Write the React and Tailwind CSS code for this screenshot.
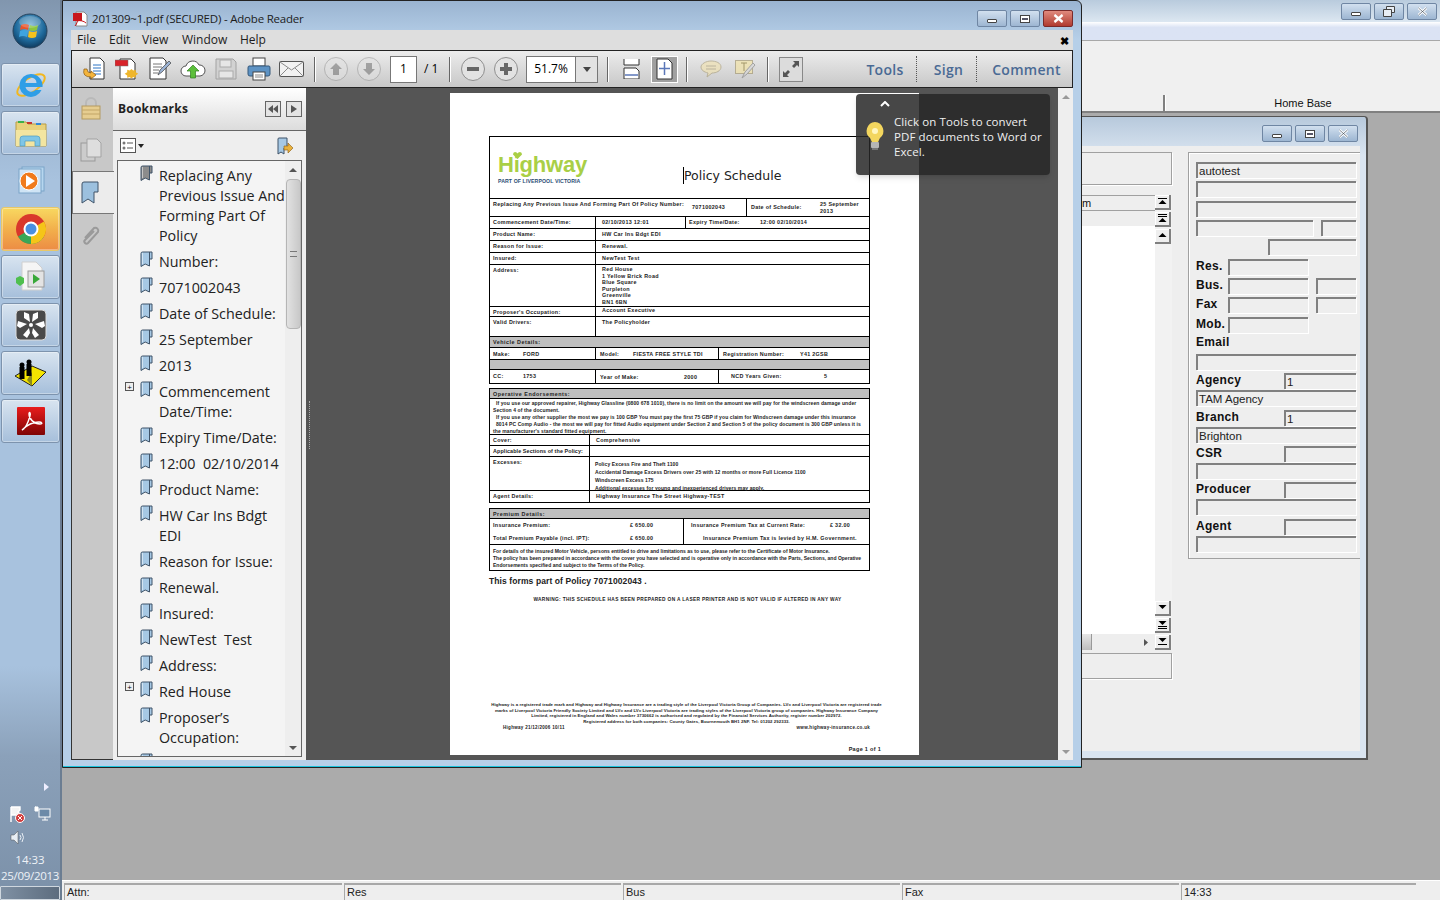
import React from 'react';

const ui = { fontFamily: '"Open Sans", "Noto Sans", sans-serif' };
const classic = { fontFamily: '"Liberation Sans", Arial, sans-serif' };

function StartOrb() {
  return (
    <svg width="36" height="36" viewBox="0 0 36 36">
      <defs>
        <radialGradient id="orb" cx="50%" cy="35%" r="70%">
          <stop offset="0" stopColor="#7fb6d8" />
          <stop offset="0.6" stopColor="#1e6a9c" />
          <stop offset="1" stopColor="#0c3050" />
        </radialGradient>
      </defs>
      <circle cx="18" cy="18" r="17" fill="url(#orb)" stroke="#27435c" />
      <path d="M9 12q4-2 8 0l-1 5q-4-2-8 0z" fill="#e8552c" />
      <path d="M18 12q4 2 8 0l-1 5q-4 2-8 0z" fill="#8cc63f" />
      <path d="M8 18q4-2 8 0l-1 6q-4-2-8 0z" fill="#3ea4e0" />
      <path d="M17 18q4 2 8 0l-1 6q-4 2-8 0z" fill="#f6c21c" />
      <ellipse cx="18" cy="9" rx="11" ry="6" fill="#fff" opacity="0.2" />
    </svg>
  );
}

function IeIcon() {
  return (
    <svg width="34" height="34" viewBox="0 0 34 34">
      <ellipse cx="17" cy="17" rx="16" ry="7" transform="rotate(-35 17 17)" fill="none" stroke="#f2b71e" strokeWidth="2" />
      <path d="M17 6a11.500 11.500 0 1 0 10.500 16h-6a6 6 0 0 1-10-3h17a11.500 11.500 0 0 0-11.500-13zM11.500 15a5.500 5.500 0 0 1 11 0z" fill="#2f9ee6" />
    </svg>
  );
}

function FolderIcon() {
  return (
    <svg width="34" height="32" viewBox="0 0 34 32">
      <path d="M2 5h10l2 2h18v22H2z" fill="#e8d27c" stroke="#b79c44" />
      <rect x="4" y="4" width="6" height="2" fill="#3db14a" />
      <rect x="13" y="5" width="5" height="2" fill="#c9352c" />
      <rect x="22" y="6" width="5" height="2" fill="#2f8ad8" />
      <path d="M2 13h30v16H2z" fill="#f3e5a0" />
      <path d="M6 29v-7q0-3 3-3h14q3 0 3 3v7h-5v-5H11v5z" fill="#7fc6e6" stroke="#4e9cc2" strokeWidth="0.7" />
    </svg>
  );
}

function MediaIcon() {
  return (
    <svg width="30" height="30" viewBox="0 0 30 30">
      <rect x="6" y="1" width="22" height="24" fill="#b6d6ef" stroke="#7aa4c8" />
      <rect x="3" y="3" width="22" height="24" fill="#cfe4f5" stroke="#7aa4c8" />
      <circle cx="13" cy="15" r="9" fill="#f07b1c" stroke="#fff" strokeWidth="1" />
      <path d="M10 9l9 6-9 6z" fill="#fff" />
    </svg>
  );
}

function ChromeIcon() {
  return (
    <svg width="32" height="32" viewBox="0 0 32 32">
      <circle cx="16" cy="16" r="15" fill="#d9372c" />
      <path d="M16 16L29 23.500A15 15 0 0 1 16 31A15 15 0 0 1 3 23.500z" fill="#3aa757" />
      <path d="M16 16L29 8.500A15 15 0 0 1 16 31z" fill="#f5c518" />
      <circle cx="16" cy="16" r="7.500" fill="#fff" />
      <circle cx="16" cy="16" r="5.500" fill="#4a8fe0" />
    </svg>
  );
}

function DocPlayIcon() {
  return (
    <svg width="32" height="32" viewBox="0 0 32 32">
      <path d="M7 1h14l6 6v22H7z" fill="#f5f5f5" stroke="#cfcfcf" />
      <rect x="13" y="10" width="16" height="16" fill="#e3e3e3" stroke="#9a9a9a" />
      <path d="M18 13l7 5-7 5z" fill="#38a838" />
      <path d="M1 17l4-2 4 2v5l-4 3-4-3z" fill="#4fbf4f" />
    </svg>
  );
}

function StarBox() {
  return (
    <svg width="32" height="32" viewBox="0 0 32 32">
      <rect x="1" y="1" width="30" height="30" rx="4" fill="#4a4a4a" stroke="#ddd" />
      <g fill="#fff">
        <path d="M9 3l5 2 1 8-6-4z" />
        <path d="M23 3l-5 2-1 8 6-4z" />
        <path d="M3 12l9 3-7 4-3-2z" />
        <path d="M29 12l-9 3 7 4 3-2z" />
        <path d="M14 19l-6 7 4 3 3-5z" />
        <path d="M18 19l6 7-4 3-3-5z" />
      </g>
      <circle cx="16" cy="16" r="2" fill="#fff" />
    </svg>
  );
}

function YellowBox() {
  return (
    <svg width="34" height="34" viewBox="0 0 34 34">
      <path d="M1 20L18 10l14 6-14 14z" fill="#f4e400" stroke="#222" />
      <path d="M13 24l5-8v14z" fill="#8a8a20" />
      <circle cx="8" cy="9" r="2.500" fill="#000" />
      <rect x="5.500" y="11" width="5" height="12" fill="#000" />
      <circle cx="15" cy="6" r="2.500" fill="#000" />
      <rect x="12.500" y="8" width="5" height="12" fill="#000" />
    </svg>
  );
}

function AcrobatTile() {
  return (
    <svg width="28" height="28" viewBox="0 0 28 28">
      <defs>
        <linearGradient id="acr" x1="0" y1="0" x2="0" y2="1">
          <stop offset="0" stopColor="#e81c1c" />
          <stop offset="1" stopColor="#7f0404" />
        </linearGradient>
      </defs>
      <rect width="28" height="28" rx="1" fill="url(#acr)" />
      <path d="M5 23c3-1 6-7 8-14 1-3-1-5-1-2 0 5 5 10 11 10 3 0 2-2-1-2-5 0-12 3-17 8z" fill="none" stroke="#fff" strokeWidth="1.400" />
    </svg>
  );
}

function PdfSmall() {
  return (
    <svg width="16" height="16" viewBox="0 0 16 16">
      <path d="M3 1h8l3 3v11H3z" fill="#fff" stroke="#888" />
      <path d="M0 2h9v8H0z" fill="#c8161d" />
      <path d="M2 15c2-2 3-6 3-9M4 10c3-1 7 0 9 2" fill="none" stroke="#c8161d" />
    </svg>
  );
}

function Bookmark({ grey }) {
  const fill = grey ? '#8c8c8c' : '#a6c8e4';
  return (
    <svg width="13" height="17" viewBox="0 0 13 17" className="shrink-0">
      <path d="M1 2.500Q1 1 2.500 1H12v7H9.500v7L5.200 13 1 15.500z" fill={fill} stroke="#3f5368" />
      <path d="M9.500 1v7" stroke="#3f5368" />
      <path d="M2.500 2v11" stroke="#fff" strokeOpacity="0.5" />
    </svg>
  );
}

function ToolIcon({ kind }) {
  if (kind === 'create') {
    return (
      <svg width="24" height="24" viewBox="0 0 24 24">
        <path d="M8 1h10l4 4v17H8z" fill="#fff" stroke="#333" />
        <path d="M11 8h8M11 11h8M11 14h8M11 17h8" stroke="#2d74c4" />
        <path d="M2 12q-2 8 7 8v2l5-4-5-4v2q-4 0-4-4z" fill="#f4b43c" stroke="#8a5a10" strokeWidth="0.7" />
      </svg>
    );
  }
  if (kind === 'edit') {
    return (
      <svg width="24" height="24" viewBox="0 0 24 24">
        <path d="M2 1h13l3 3v18H2z" fill="#fff" stroke="#333" />
        <path d="M5 7h9M5 10h9M5 13h6M5 16h5" stroke="#777" />
        <path d="M10 18l2-5 9-9 2 2-9 9z" fill="#9cb3d4" stroke="#444" strokeWidth="0.7" />
      </svg>
    );
  }
  if (kind === 'review') {
    return (
      <svg width="24" height="24" viewBox="0 0 24 24">
        <path d="M5 2h11l4 4v16H5z" fill="#fff" stroke="#333" />
        <rect x="0" y="3" width="13" height="6" fill="#d8232a" stroke="#777" strokeWidth="0.5" />
        <path d="M15 12l2 2 3-1 0 3 3 2-3 2 0 3-3-1-2 2-2-2-3 1 0-3-3-2 3-2 0-3 3 1z" fill="#efb62c" transform="translate(2 0) scale(.85 .8) translate(2 3)" />
      </svg>
    );
  }
  if (kind === 'cloud') {
    return (
      <svg width="26" height="22" viewBox="0 0 26 22">
        <path d="M6 18a5 5 0 0 1 0-10 7 7 0 0 1 13-1 5.500 5.500 0 0 1 1 11z" fill="#fff" stroke="#555" />
        <path d="M13 7l6 6h-3.500v7h-5v-7H7z" fill="#5cbf3b" stroke="#2f7f20" strokeWidth="0.7" />
      </svg>
    );
  }
  if (kind === 'save') {
    return (
      <svg width="22" height="22" viewBox="0 0 22 22">
        <path d="M1 1h17l3 3v17H1z" fill="#d2d2d2" stroke="#a2a2a2" />
        <rect x="5" y="2" width="11" height="7" fill="#e6e6e6" stroke="#aaa" />
        <rect x="4" y="13" width="14" height="7" fill="#e6e6e6" stroke="#aaa" />
      </svg>
    );
  }
  if (kind === 'print') {
    return (
      <svg width="24" height="24" viewBox="0 0 24 24">
        <rect x="6" y="1" width="12" height="8" fill="#fff" stroke="#444" />
        <path d="M2 9h20q1 0 1 2v6q0 2-2 2H3q-2 0-2-2v-6q0-2 1-2z" fill="#5e93c4" stroke="#35587a" />
        <rect x="6" y="15" width="12" height="8" fill="#fff" stroke="#444" />
        <path d="M8 18h8M8 20h8" stroke="#888" />
      </svg>
    );
  }
  return (
    <svg width="25" height="18" viewBox="0 0 25 18">
      <rect x="0.500" y="1.500" width="24" height="15" rx="1" fill="#f2f2f2" stroke="#555" />
      <path d="M1 2l11.500 8L24 2M1 16l8-8M24 16l-8-8" fill="none" stroke="#8a8a8a" />
    </svg>
  );
}

function RoundBtn({ d, dim }) {
  return (
    <span className={`flex h-[24px] w-[24px] items-center justify-center rounded-full border border-[#8f8f8f] bg-[#e2e2e2] ${dim ? 'opacity-50' : ''}`}>
      <svg width="16" height="16" viewBox="0 0 16 16"><path d={d} fill="#666" /></svg>
    </span>
  );
}

const Sep = ({ cls }) => <span className={`h-[25px] w-[2px] shrink-0 border-l border-[#666] bg-white ${cls}`} />;

function AdobeToolbar() {
  return (
    <div className="flex h-[38px] items-center border border-[#222] bg-gradient-to-b from-[#ececec] to-[#c8c8c8] pl-[5px]" >
      {['create', 'review', 'edit', 'cloud', 'save', 'print', 'mail'].map((k) => (
        <span key={k} className="flex w-[33px] shrink-0 justify-center"><ToolIcon kind={k} /></span>
      ))}
      <Sep cls="ml-[6px]" />
      <span className="ml-[8px] flex w-[57px] justify-between">
        <RoundBtn dim d="M8 2l6 6h-3v6H5V8H2z" />
        <RoundBtn dim d="M8 14l6-6h-3V2H5v6H2z" />
      </span>
      <span className="ml-[9px] flex h-[27px] w-[27px] items-center justify-center border border-[#777] bg-white text-[12px] text-black">1</span>
      <span className="ml-[7px] w-[25px] text-[12px] text-black">/ 1</span>
      <Sep cls="ml-[0px]" />
      <span className="ml-[10px] flex w-[57px] justify-between">
        <RoundBtn d="M2 6h12v4H2z" />
        <RoundBtn d="M6 2h4v4h4v4h-4v4H6v-4H2V6h4z" />
      </span>
      <span className="ml-[8px] flex h-[27px] w-[72px] items-center border border-[#777] bg-white">
        <span className="flex-1 text-center text-[12px] text-black">51.7%</span>
        <span className="flex h-full w-[22px] items-center justify-center border-l border-[#777] bg-[#e2e2e2]">
          <svg width="8" height="5"><path d="M0 0h8L4 5z" fill="#444" /></svg>
        </span>
      </span>
      <Sep cls="ml-[9px]" />
      <span className="ml-[13px] flex w-[18px] justify-center">
        <svg width="17" height="20" viewBox="0 0 17 20">
          <path d="M1 0v6h15V0" fill="#fff" stroke="#333" />
          <path d="M1 20v-11h12l3 3v8z" fill="#fff" stroke="#333" />
          <path d="M2 16h13" stroke="#5b77b8" strokeWidth="1.500" />
        </svg>
      </span>
      <span className="ml-[11px] flex h-[27px] w-[27px] items-center justify-center border border-white bg-[#a0a0a0]">
        <svg width="17" height="22" viewBox="0 0 17 22">
          <path d="M1 1h11l4 4v16H1z" fill="#fff" stroke="#333" />
          <path d="M8.500 4v13M3 10.500h11" stroke="#5b77b8" strokeWidth="1.500" />
        </svg>
      </span>
      <Sep cls="ml-[8px]" />
      <span className="ml-[11px] flex w-[24px] justify-center opacity-60">
        <svg width="22" height="20" viewBox="0 0 22 20">
          <path d="M11 2c5 0 10 2 10 6s-5 6-9 6l-5 4 1-4c-4-1-7-3-7-6s5-6 10-6z" fill="#f3e3ad" stroke="#a69a74" />
          <path d="M6 7h10M6 10h10" stroke="#a69a74" />
        </svg>
      </span>
      <span className="ml-[10px] flex w-[24px] justify-center opacity-70">
        <svg width="21" height="20" viewBox="0 0 21 20">
          <rect x="0.500" y="1.500" width="17" height="13" fill="#f2e3a8" stroke="#a69a74" />
          <path d="M6 4h6M9 4v8" stroke="#8a7a3a" />
          <path d="M7 19l3-6 8-9 2 2-8 9z" fill="#d8d8d8" stroke="#8a8a8a" />
        </svg>
      </span>
      <Sep cls="ml-[10px]" />
      <span className="ml-[10px] flex h-[25px] w-[24px] items-center justify-center border border-[#888] bg-[#dcdcdc]">
        <svg width="18" height="18" viewBox="0 0 18 18"><path d="M11 1h6v6l-2-2-3 3-2-2 3-3zM7 17H1v-6l2 2 3-3 2 2-3 3z" fill="#555" /></svg>
      </span>
      <span className="ml-auto flex h-[26px] items-center text-[14px] font-semibold tracking-[0.3px] text-[#4a6a94]">
        <span className="flex w-[66px] justify-center pl-[4px]">Tools</span>
        <span className="h-full border-l border-dotted border-[#555]" />
        <span className="flex w-[59px] justify-center pl-[4px]">Sign</span>
        <span className="h-full border-l border-dotted border-[#555]" />
        <span className="flex w-[95px] justify-center pl-[4px]">Comment</span>
      </span>
    </div>
  );
}

const bookmarks = [
  { t: ['Replacing Any', 'Previous Issue And', 'Forming Part Of', 'Policy'], grey: true },
  { t: ['Number:'] },
  { t: ['7071002043'] },
  { t: ['Date of Schedule:'] },
  { t: ['25 September'] },
  { t: ['2013'] },
  { t: ['Commencement', 'Date/Time:'], plus: true },
  { t: ['Expiry Time/Date:'] },
  { t: ['12:00  02/10/2014'] },
  { t: ['Product Name:'] },
  { t: ['HW Car Ins Bdgt', 'EDI'] },
  { t: ['Reason for Issue:'] },
  { t: ['Renewal.'] },
  { t: ['Insured:'] },
  { t: ['NewTest  Test'] },
  { t: ['Address:'] },
  { t: ['Red House'], plus: true },
  { t: ['Proposer\u2019s', 'Occupation:'] },
  { t: [''] },
];

function BookmarkRow({ item }) {
  return (
    <div className="relative flex pl-[22px] pt-[3px] pb-[3px]">
      {item.plus && (
        <span className="absolute left-[7px] top-[3px] flex h-[9px] w-[9px] items-center justify-center border border-[#555] bg-[#eee] text-[8px] leading-none text-black">+</span>
      )}
      <span className="-mt-[1px] w-[19px] shrink-0"><Bookmark grey={item.grey} /></span>
      <div className="whitespace-pre text-[14.300px] leading-[20px] text-[#222]">
        {item.t.map((l, i) => <div key={i} className="h-[20px]">{l}</div>)}
      </div>
    </div>
  );
}

function SidePanel() {
  return (
    <div className="flex w-[235px] shrink-0">
      <div className="relative flex w-[42px] flex-col border-l border-b border-[#333] bg-[#c8c8c8]">
        <span className="ml-[9px] mt-[8px] block">
          <svg width="20" height="24" viewBox="0 0 20 24">
            <path d="M5 11V7a5 5 0 0 1 10 0v4" fill="none" stroke="#b9b9b9" strokeWidth="2" />
            <rect x="1" y="10" width="18" height="13" fill="#e6cd90" stroke="#b39a60" />
            <path d="M1 14h18M1 18h18" stroke="#c2a566" />
          </svg>
        </span>
        <span className="ml-[8px] mt-[18px] block">
          <svg width="22" height="24" viewBox="0 0 22 24">
            <rect x="1" y="5" width="14" height="18" fill="#ccc" stroke="#999" />
            <path d="M7 1h10l4 4v14H7z" fill="#dedede" stroke="#a3a3a3" />
          </svg>
        </span>
        <div className="mt-[9px] flex h-[43px] w-[42px] items-center border-y border-l border-[#777] bg-[#ececec] pl-[8px]">
          <svg width="18" height="24" viewBox="0 0 18 24">
            <path d="M1 3q0-2 2-2h14v10h-4v11l-6-4-6 4z" fill="#9cc0de" stroke="#3f5368" />
          </svg>
        </div>
        <span className="ml-[8px] mt-[9px] block">
          <svg width="22" height="24" viewBox="0 0 22 24">
            <path d="M5 15l9-10a3 3 0 0 1 4 4L8 20a2 2 0 0 1-3-3l9-9" fill="none" stroke="#9a9a9a" strokeWidth="2" />
          </svg>
        </span>
      </div>
      <div className="flex w-[193px] flex-col overflow-hidden bg-[#eeeeee]">
        <div className="flex h-[43px] shrink-0 items-center border-b border-[#666] bg-gradient-to-b from-white to-[#dcdcdc] pl-[5px] pr-[4px]">
          <span className="flex-1 text-[12px] font-bold tracking-[0.2px] text-[#222]">Bookmarks</span>
          <span className="flex h-[16px] w-[16px] items-center justify-center border border-[#666] bg-[#e4e4e4]">
            <svg width="10" height="8"><path d="M5 0v8L0 4zM10 0v8L5 4z" fill="#555" /></svg>
          </span>
          <span className="ml-[5px] flex h-[16px] w-[16px] items-center justify-center border border-[#666] bg-[#e4e4e4]">
            <svg width="6" height="8"><path d="M0 0v8l6-4z" fill="#555" /></svg>
          </span>
        </div>
        <div className="flex h-[29px] shrink-0 items-center pl-[7px] pr-[13px]">
          <svg width="16" height="15" viewBox="0 0 16 15">
            <rect x="0.500" y="0.500" width="15" height="14" fill="#fff" stroke="#555" />
            <circle cx="4" cy="5" r="1.500" fill="#777" /><circle cx="4" cy="10" r="1.500" fill="#777" />
            <path d="M7 5h6M7 10h6" stroke="#555" />
          </svg>
          <svg className="ml-[2px]" width="6" height="4"><path d="M0 0h6L3 4z" fill="#222" /></svg>
          <span className="ml-auto">
            <svg width="16" height="18" viewBox="0 0 16 18">
              <path d="M1 2q0-1 1-1h8v10H7v6l-3-2-3 2z" fill="#a6c8e4" stroke="#3f5368" />
              <path d="M7 9h4V6l5 5-5 5v-3H7z" fill="#e9b13c" stroke="#8a5a10" strokeWidth="0.6" />
            </svg>
          </span>
        </div>
        <div className="ml-[4px] flex h-[597px] w-[185px] overflow-hidden border border-[#666] bg-[#f4f4f4]">
          <div className="w-[167px] shrink-0 pt-[2px]">
            {bookmarks.map((b, i) => <BookmarkRow key={i} item={b} />)}
          </div>
          <div className="flex w-[16px] flex-col items-center bg-[#eeeeee]">
            <svg className="mt-[7px]" width="8" height="4"><path d="M0 4h8L4 0z" fill="#555" /></svg>
            <div className="mt-[7px] flex h-[150px] w-[15px] items-center justify-center rounded-sm border border-[#b5b5b5] bg-gradient-to-r from-[#e2e2e2] to-[#c8c8c8]">
              <span className="h-[6px] w-[7px] border-y border-[#777]" />
            </div>
            <svg className="mb-[6px] mt-auto" width="8" height="4"><path d="M0 0h8L4 4z" fill="#555" /></svg>
          </div>
        </div>
      </div>
    </div>
  );
}

const Row = ({ h, grey, last, children }) => (
  <div className={`flex ${h} ${grey ? 'bg-[#bfbfbf]' : ''} ${last ? '' : 'border-b border-black'}`}>{children}</div>
);
const Cell = ({ w, children }) => (
  <div className={`${w} overflow-hidden whitespace-nowrap border-r border-black pl-[3px] pt-[2px]`}>{children}</div>
);

function PolicyPage() {
  return (
    <div className="relative ml-[144px] mt-[5px] h-[662px] w-[469px] overflow-hidden bg-white pl-[39px] pt-[43px] text-[5.400px] font-semibold leading-[6.500px] tracking-[0.3px] text-[#222]" style={classic}>
      <div className="w-[381px] border border-black">
        <Row h="h-[62px]">
          <div className="relative w-[193px] pl-[8px] pt-[16px]">
            <svg className="absolute left-[23px] top-[15px]" width="9" height="7" viewBox="0 0 9 7"><path d="M4.500 7L0 2.500Q0 0 2 0q2 0 2.500 1.500Q5 0 7 0q2 0 2 2.500z" fill="#a9cf46" /></svg>
            <div className="text-[22px] font-bold leading-[24px] tracking-[-0.2px] text-[#a9cf46]">Highway</div>
            <div className="mt-[1px] text-[5.200px] font-bold leading-[6px] tracking-[0.1px] text-[#2a4d74]">PART OF LIVERPOOL VICTORIA</div>
          </div>
          <div className="mt-[30px] h-[17px] border-l border-black pl-[0px] text-[12.500px] font-normal leading-[17px] tracking-normal text-[#222]" style={{ fontFamily: '"DejaVu Sans", sans-serif' }}>Policy Schedule</div>
        </Row>
        <Row h="h-[18px]">
          <div className="w-[257px] border-r border-black pl-[3px] pt-[2px]">
            <div className="flex">
              <span className="w-[199px]">Replacing Any Previous Issue And Forming Part Of Policy Number:</span>
              <span className="pt-[3px]">7071002043</span>
            </div>
          </div>
          <div className="flex pl-[4px] pt-[5px]">
            <span className="w-[69px]">Date of Schedule:</span>
            <span className="-mt-[3px] w-[44px]">25 September 2013</span>
          </div>
        </Row>
        <Row h="h-[12px]">
          <Cell w="w-[106px]">Commencement Date/Time:</Cell>
          <Cell w="w-[90px]"><span className="ml-[3px]">02/10/2013  12:01</span></Cell>
          <div className="flex pl-[3px] pt-[2px]"><span className="w-[71px]">Expiry Time/Date:</span><span>12:00  02/10/2014</span></div>
        </Row>
        {[['Product Name:', 'HW Car Ins Bdgt EDI'], ['Reason for Issue:', 'Renewal.'], ['Insured:', 'NewTest  Test']].map(([a, b]) => (
          <Row key={a} h="h-[12px]"><Cell w="w-[106px]">{a}</Cell><div className="pl-[6px] pt-[2px]">{b}</div></Row>
        ))}
        <Row h="h-[42px]">
          <Cell w="w-[106px]">Address:</Cell>
          <div className="pl-[6px] pt-[1px]">
            <div>Red House</div><div>1 Yellow Brick Road</div><div>Blue Square</div><div>Purpleton</div><div>Greenville</div><div>BN1 6BN</div>
          </div>
        </Row>
        <Row h="h-[10px]"><Cell w="w-[106px]">Proposer's Occupation:</Cell><div className="pl-[6px]">Account Executive</div></Row>
        <Row h="h-[20px]"><Cell w="w-[106px]">Valid Drivers:</Cell><div className="pl-[6px] pt-[2px]">The Policyholder</div></Row>
        <Row h="h-[11px]" grey><div className="pl-[3px] pt-[2px] tracking-[0.5px]">Vehicle Details:</div></Row>
        <Row h="h-[12px]">
          <div className="w-[106px] border-r border-black pl-[3px] pt-[3px]"><span className="inline-block w-[30px]">Make:</span>FORD</div>
          <div className="flex w-[123px] border-r border-black pl-[4px] pt-[3px]"><span className="w-[33px]">Model:</span>FIESTA FREE STYLE TDI</div>
          <div className="flex pl-[4px] pt-[3px]"><span className="w-[77px]">Registration Number:</span>Y41 2GSB</div>
        </Row>
        <Row h="h-[10px]" grey />
        <Row h="h-[13px]" last>
          <Cell w="w-[106px]"><span className="inline-block w-[30px] pt-[1px]">CC:</span>1753</Cell>
          <div className="flex w-[123px] border-r border-black pl-[4px] pt-[4px]"><span className="w-[84px]">Year of Make:</span>2000</div>
          <div className="flex pl-[12px] pt-[3px]"><span className="w-[93px]">NCD Years Given:</span>5</div>
        </Row>
      </div>

      <div className="mt-[4px] w-[381px] border border-black">
        <Row h="h-[10px]" grey><div className="pl-[3px] pt-[2px] tracking-[0.5px]">Operative Endorsements:</div></Row>
        <Row h="h-[36px]">
          <div className="whitespace-pre-wrap pl-[3px] pt-[1px] text-[5px] leading-[7px] tracking-[0.1px]">
            <div>  If you use our approved repairer, Highway Glassline (0800 678 1010), there is no limit on the amount we will pay for the windscreen damage under</div>
            <div>Section 4 of the document.</div>
            <div>  If you use any other supplier the most we pay is 100 GBP You must pay the first 75 GBP if you claim for Windscreen damage under this insurance</div>
            <div>  8014 PC Comp Audio - the most we will pay for fitted Audio equipment under Section 2 and Section 5 of the policy document is 300 GBP unless it is</div>
            <div>the manufacturer's standard fitted equipment.</div>
          </div>
        </Row>
        <Row h="h-[11px]"><Cell w="w-[100px]">Cover:</Cell><div className="pl-[6px] pt-[2px]">Comprehensive</div></Row>
        <Row h="h-[11px]"><Cell w="w-[100px]"><span className="tracking-[0.1px]">Applicable Sections of the Policy:</span></Cell></Row>
        <Row h="h-[34px]">
          <Cell w="w-[100px]">Excesses:</Cell>
          <div className="pl-[5px] pt-[3px] text-[5px] leading-[8px] tracking-[0.1px]">
            <div> Policy Excess Fire and Theft 1100</div>
            <div>Accidental Damage Excess Drivers over 25 with 12 months or more Full Licence 1100</div>
            <div>Windscreen Excess 175</div>
            <div>Additional excesses for young and inexperienced drivers may apply.</div>
          </div>
        </Row>
        <Row h="h-[11px]" last><Cell w="w-[100px]">Agent Details:</Cell><div className="pl-[6px] pt-[2px]">Highway Insurance The Street Highway-TEST</div></Row>
      </div>

      <div className="mt-[5px] w-[381px] border border-black">
        <Row h="h-[10px]" grey><div className="pl-[3px] pt-[2px] tracking-[0.5px]">Premium Details:</div></Row>
        <Row h="h-[26px]">
          <div className="w-[194px] border-r border-black pl-[3px] pt-[3px]">
            <div className="flex h-[13px]"><span className="w-[137px]">Insurance Premium:</span>£ 650.00</div>
            <div className="flex"><span className="w-[137px]">Total Premium Payable (incl. IPT):</span>£ 650.00</div>
          </div>
          <div className="pl-[7px] pt-[3px]">
            <div className="flex h-[13px]"><span className="w-[139px]">Insurance Premium Tax at Current Rate:</span>£ 32.00</div>
            <div className="pl-[12px]">Insurance Premium Tax is levied by H.M. Government.</div>
          </div>
        </Row>
        <Row h="h-[25px]" last>
          <div className="whitespace-nowrap pl-[3px] pt-[3px] text-[5px] leading-[7px] tracking-[0.02px]">
            <div>For details of the insured Motor Vehicle, persons entitled to drive and limitations as to use, please refer to the Certificate of Motor Insurance.</div>
            <div>The policy has been prepared in accordance with the cover you have selected and is operative only in accordance with the Parts, Sections, and Operative</div>
            <div>Endorsements specified and subject to the Terms of the Policy.</div>
          </div>
        </Row>
      </div>

      <div className="mt-[5px] text-[8.500px] leading-[11px] tracking-[0.1px]">This forms part of Policy  7071002043  .</div>
      <div className="mt-[10px] w-[381px] whitespace-nowrap pl-[16px] text-center text-[4.800px] leading-[6px] tracking-[0.35px]">WARNING: THIS SCHEDULE HAS BEEN PREPARED ON A LASER PRINTER AND IS NOT VALID IF ALTERED IN ANY WAY</div>
      <div className="mt-[99px] w-[395px] text-center text-[4.300px] leading-[5.500px] tracking-[0.07px]">
        <div>Highway is a registered trade mark and Highway and Highway Insurance are a trading style of the Liverpool Victoria Group of Companies. LV= and Liverpool Victoria are registered trade</div>
        <div>marks of Liverpool Victoria Friendly Society Limited and LV= and LV= Liverpool Victoria are trading styles of the Liverpool Victoria group of companies. Highway Insurance Company</div>
        <div>Limited, registered in England and Wales number 3730662 is authorised and regulated by the Financial Services Authority, register number 202972.</div>
        <div>Registered address for both companies: County Gates, Bournemouth BH1 2NF. Tel: 01202 292333.</div>
      </div>
      <div className="flex w-[381px] justify-between pl-[14px] pt-[1px] text-[4.500px] leading-[6px]">
        <span>Highway 21/12/2006 10/11</span><span>www.highway-insurance.co.uk</span>
      </div>
      <div className="mt-[15px] w-[392px] text-right text-[5.500px] leading-[7px]">Page  1  of  1</div>
    </div>
  );
}

function Tooltip() {
  return (
    <div className="absolute left-[785px] top-[6px] flex h-[81px] w-[194px] rounded-[4px] bg-[rgba(39,39,39,0.85)] shadow-md" >
      <svg className="absolute left-[24px] top-[7px]" width="10" height="6" viewBox="0 0 10 6"><path d="M1 5l4-4 4 4" fill="none" stroke="#fff" strokeWidth="2" /></svg>
      <svg className="absolute left-[9px] top-[27px]" width="20" height="30" viewBox="0 0 20 30">
        <path d="M10 1a9 9 0 0 0-5 16c1 1 1 3 2 4h6c1-1 1-3 2-4a9 9 0 0 0-5-16z" fill="#f3d65e" />
        <circle cx="10" cy="10" r="3" fill="#fff6c0" />
        <rect x="6" y="21" width="8" height="6" rx="1" fill="#b5b5b5" />
        <rect x="7" y="27" width="6" height="2" fill="#777" />
      </svg>
      <div className="ml-[38px] mt-[20px] w-[152px] text-[11.500px] leading-[15px] tracking-[0.1px] text-[#f0f0f0]">
        Click on Tools to convert PDF documents to Word or Excel.
      </div>
    </div>
  );
}

function WinButtons({ restore, redClose }) {
  return (
    <div className="flex gap-[3px]">
      <span className="flex h-[17px] w-[30px] items-end justify-center rounded-[2px] border border-[#6f86a3] bg-gradient-to-b from-[#d2e0ef] to-[#9db6d2] pb-[3px]">
        <span className="h-[4px] w-[10px] rounded-[1px] border border-[#444] bg-white" />
      </span>
      <span className="flex h-[17px] w-[30px] items-center justify-center rounded-[2px] border border-[#6f86a3] bg-gradient-to-b from-[#d2e0ef] to-[#9db6d2]">
        {restore ? (
          <svg width="12" height="11" viewBox="0 0 12 11"><path d="M3.500 3V.500h8v6H9M.500 3.500h8v7h-8z" fill="#e8eef5" stroke="#444" /></svg>
        ) : (
          <span className="flex h-[8px] w-[10px] items-center justify-center border border-[#444] bg-white"><span className="h-[2px] w-[6px] bg-[#556]" /></span>
        )}
      </span>
      <span className={`flex h-[17px] w-[30px] items-center justify-center rounded-[2px] border ${redClose ? 'border-[#7a2a2a] bg-gradient-to-b from-[#e08a7e] to-[#b03a30]' : 'border-[#6f86a3] bg-gradient-to-b from-[#d2e0ef] to-[#9db6d2]'}`}>
        <svg width="11" height="9" viewBox="0 0 11 9"><path d="M1.500 1l8 7M9.500 1l-8 7" stroke="#fff" strokeWidth="2.400" /><path d="M1.500 1l8 7M9.500 1l-8 7" stroke={redClose ? '#fff' : '#44505e'} strokeWidth="0.700" /></svg>
      </span>
    </div>
  );
}

function AdobeWindow() {
  return (
    <div className="absolute left-[62px] top-0 z-20 flex h-[768px] w-[1020px] flex-col rounded-tr-[6px] border-t border-l border-r border-b border-[#222] bg-gradient-to-b from-[#9ab4d1] to-[#b6cfe8] to-[5%]" style={ui}>
      <div className="flex h-[29px] shrink-0 items-center pl-[10px] pr-[8px] pt-[6px]">
        <PdfSmall />
        <span className="ml-[3px] flex-1 text-[11.500px] tracking-[-0.2px] text-[#1c1c1c]">201309~1.pdf (SECURED) - Adobe Reader</span>
        <WinButtons redClose />
      </div>
      <div className="mx-[8px] flex flex-col">
        <div className="flex h-[20px] items-center bg-[#dedede] pl-[6px] text-[12px] text-[#1c1c1c]">
          <span className="w-[32px]">File</span>
          <span className="w-[33px]">Edit</span>
          <span className="w-[40px]">View</span>
          <span className="w-[58px]">Window</span>
          <span>Help</span>
          <span className="ml-auto pr-[4px] text-[11px] font-bold leading-none text-black">✖</span>
        </div>
        <AdobeToolbar />
        <div className="relative flex h-[672px] bg-[#555555]">
          <SidePanel />
          <div className="absolute left-[238px] top-[313px] h-[48px] border-l border-dotted border-[#aaa]" />
          <div className="flex-1 overflow-hidden"><PolicyPage /></div>
          <div className="flex w-[15px] shrink-0 flex-col items-center bg-[#eeeeee]">
            <svg className="mt-[7px]" width="8" height="4"><path d="M0 4h8L4 0z" fill="#999" /></svg>
            <svg className="mb-[6px] mt-auto" width="8" height="4"><path d="M0 0h8L4 4z" fill="#999" /></svg>
          </div>
          <Tooltip />
        </div>
      </div>
      <div className="mt-auto h-[1px] bg-[#19c3dc]" />
    </div>
  );
}

const Field = ({ w, ml, children }) => (
  <div className={`${w} ${ml || ''} h-[16px] shrink-0 overflow-hidden border-t-2 border-l-2 border-t-[#808080] border-l-[#808080] bg-[#eeeeee] pl-[1px] text-[11.500px] leading-[15px] text-[#222] shadow-[1px_1px_0_#fff]`} style={classic}>{children}</div>
);
const Lbl = ({ w, children }) => (
  <span className={`${w} -mt-[1px] shrink-0 text-[12px] font-bold leading-[16px] tracking-[0.3px] text-[#111]`} style={classic}>{children}</span>
);

function ScrollBtn({ d }) {
  return (
    <span className="flex h-[15px] w-[16px] items-center justify-center border-r-2 border-b-2 border-[#808080] bg-[#eeeeee] shadow-[inset_1px_1px_0_#fff]">
      <svg width="9" height="9" viewBox="0 0 9 9"><path d={d} fill="#000" /></svg>
    </span>
  );
}

function HomeBaseWindow() {
  return (
    <div className="absolute left-[950px] top-0 z-10 h-[880px] w-[490px]" style={classic}>
      <div className="flex h-[22px] items-center justify-end bg-gradient-to-b from-[#b9cbdd] to-[#dce7f1] pr-[3px]">
        <WinButtons restore />
      </div>
      <div className="h-[18px] bg-gradient-to-b from-white to-[#dbe3f4] to-[30%]" />
      <div className="h-[55px] border-t border-[#a8a8a8] bg-[#f0f0f0]" />
      <div className="flex h-[18px] border-b-2 border-[#808080] bg-[#f0f0f0]">
        <span className="w-[215px] border-r-2 border-[#808080]" />
        <span className="flex-1 border-l border-white text-center text-[11px] leading-[17px] text-[#111]">Home Base</span>
      </div>

      <div className="mt-[3px] flex h-[644px] w-[418px] flex-col rounded-tr-[4px] border-t border-r-2 border-b-2 border-[#555] bg-gradient-to-b from-[#b7c9dc] to-[#dae5f1] to-[6%] pr-[6px]">
        <div className="flex h-[29px] shrink-0 items-center justify-end pr-[2px] pt-[4px]"><WinButtons /></div>
        <div className="flex flex-1 border-b-[7px] border-[#d9e4f0] bg-[#eeeeee] pb-[0px]">
          <div className="ml-[132px] flex w-[90px] shrink-0 flex-col">
            <div className="mt-[6px] h-[33px] border border-[#a0a0a0] border-l-0 shadow-[1px_1px_0_#fff]" />
            <div className="mt-[10px] flex h-[455px]">
              <div className="flex flex-1 flex-col">
                <div className="h-[16px] border-y border-[#a0a0a0] bg-[#eeeeee] text-[11px] leading-[15px] text-[#111]">m</div>
                <div className="h-[15px] bg-[#eeeeee]" />
                <div className="flex-1 bg-white" />
                <div className="flex h-[16px] items-center bg-[#eeeeee] pr-[7px]">
                  <span className="h-[16px] w-[10px] border-r border-[#999] bg-gradient-to-b from-[#e6e6e6] to-[#bdbdbd]" />
                  <svg className="ml-auto" width="4" height="7"><path d="M0 0v7l4-3.500z" fill="#555" /></svg>
                </div>
              </div>
              <div className="flex w-[17px] flex-col bg-[#f2f2f2]">
                <ScrollBtn d="M0 1h9v1H0zM4.500 3l4 4h-8z" />
                <span className="mt-[2px]"><ScrollBtn d="M0 0h9v1H0zM0 2h9v1H0zM4.500 4l4 4h-8z" /></span>
                <span className="mt-[2px]"><ScrollBtn d="M4.500 2l4 4h-8z" /></span>
                <span className="mt-auto"><ScrollBtn d="M0.500 2h8l-4 4z" /></span>
                <span className="mt-[2px]"><ScrollBtn d="M.5 1h8l-4 4zM0 6h9v1H0zM0 8h9v1H0z" /></span>
                <span className="mt-[2px]"><ScrollBtn d="M.5 1h8l-4 4zM0 7h9v1H0z" /></span>
              </div>
            </div>
            <div className="mt-[3px] h-[26px] border border-[#a0a0a0] border-l-0 shadow-[1px_1px_0_#fff]" />
          </div>
          <div className="ml-[16px] mt-[6px] h-[407px] w-[173px] border-t border-l border-b border-[#a0a0a0] pl-[7px] pt-[9px] shadow-[inset_1px_1px_0_#fff]">
            <Field w="w-[160px]">autotest</Field>
            <div className="mt-[3px]"><Field w="w-[160px]" /></div>
            <div className="mt-[4px]"><Field w="w-[160px]" /></div>
            <div className="mt-[3px] flex"><Field w="w-[117px]" /><Field w="w-[35px]" ml="ml-[8px]" /></div>
            <div className="mt-[3px] flex"><Field w="w-[88px]" ml="ml-[72px]" /></div>
            <div className="mt-[4px] flex"><Lbl w="w-[32px]">Res.</Lbl><Field w="w-[80px]" /></div>
            <div className="mt-[3px] flex"><Lbl w="w-[32px]">Bus.</Lbl><Field w="w-[80px]" /><Field w="w-[40px]" ml="ml-[8px]" /></div>
            <div className="mt-[3px] flex"><Lbl w="w-[32px]">Fax</Lbl><Field w="w-[80px]" /><Field w="w-[40px]" ml="ml-[8px]" /></div>
            <div className="mt-[4px] flex"><Lbl w="w-[32px]">Mob.</Lbl><Field w="w-[80px]" /></div>
            <div className="mt-[2px] flex h-[19px]"><Lbl>Email</Lbl></div>
            <Field w="w-[160px]" />
            <div className="mt-[3px] flex"><Lbl w="w-[88px]">Agency</Lbl><Field w="w-[72px]">1</Field></div>
            <div className="mt-[1px]"><Field w="w-[160px]">TAM Agency</Field></div>
            <div className="mt-[4px] flex"><Lbl w="w-[88px]">Branch</Lbl><Field w="w-[72px]">1</Field></div>
            <div className="mt-[1px]"><Field w="w-[160px]">Brighton</Field></div>
            <div className="mt-[3px] flex"><Lbl w="w-[88px]">CSR</Lbl><Field w="w-[72px]" /></div>
            <div className="mt-[1px]"><Field w="w-[160px]" /></div>
            <div className="mt-[3px] flex"><Lbl w="w-[88px]">Producer</Lbl><Field w="w-[72px]" /></div>
            <div className="mt-[1px]"><Field w="w-[160px]" /></div>
            <div className="mt-[4px] flex"><Lbl w="w-[88px]">Agent</Lbl><Field w="w-[72px]" /></div>
            <div className="mt-[1px]"><Field w="w-[160px]" /></div>
          </div>
        </div>
      </div>
    </div>
  );
}

function Tile({ active, pale, children }) {
  if (pale) {
    return <div className="flex h-[44px] items-center justify-center">{children}</div>;
  }
  const tone = active
    ? 'border-[#e8c868] bg-gradient-to-b from-[#f8d860] via-[#f2b04c] to-[#ec8c44]'
    : 'border-[#7d93ad] bg-gradient-to-b from-[#d8e4f0] to-[#a6bfdb]';
  return (
    <div className={`flex h-[44px] items-center justify-center rounded-[3px] border shadow-[inset_0_0_0_1px_rgba(255,255,255,0.35)] ${tone}`}>{children}</div>
  );
}

function Taskbar() {
  return (
    <div className="absolute left-0 top-0 z-30 flex h-[900px] w-[62px] flex-col border-r-2 border-[#6b7d92] bg-[linear-gradient(to_bottom,#8196ae_0%,#8fa7c2_6%,#a8c2de_20%,#a8c2de_74%,#8ba1ba_84%,#7b90a8_100%)]" style={ui}>
      <div className="flex h-[60px] shrink-0 items-center justify-center pt-[1px]"><StartOrb /></div>
      <div className="mt-[3px] flex flex-col gap-[4px] pl-[1px]">
        <Tile><IeIcon /></Tile>
        <Tile><FolderIcon /></Tile>
        <Tile pale><MediaIcon /></Tile>
        <Tile active><ChromeIcon /></Tile>
        <Tile><DocPlayIcon /></Tile>
        <Tile><StarBox /></Tile>
        <Tile><YellowBox /></Tile>
        <Tile><AcrobatTile /></Tile>
      </div>
      <div className="mt-auto flex flex-col items-center pb-[0px]">
        <svg className="ml-[32px]" width="5" height="8"><path d="M0 0v8l5-4z" fill="#eef" /></svg>
        <div className="mt-[15px] flex gap-[9px]">
          <svg width="16" height="17" viewBox="0 0 16 17">
            <path d="M2 1v15M2 1h9v3l-2 2 2 2v1H2" fill="#f4f4f4" stroke="#fff" strokeWidth="1.400" />
            <circle cx="11" cy="12" r="4.500" fill="#d23c3c" stroke="#fff" />
            <path d="M9 10l4 4M13 10l-4 4" stroke="#fff" />
          </svg>
          <svg width="17" height="15" viewBox="0 0 17 15">
            <rect x="5" y="3" width="11" height="8" fill="#6c8aa8" stroke="#fff" />
            <path d="M8 14h6M11 11v3" stroke="#fff" />
            <path d="M1 1h1M3 1h1v4H1V1z" stroke="#fff" fill="#fff" />
          </svg>
        </div>
        <svg className="-ml-[25px] mt-[7px]" width="15" height="15" viewBox="0 0 15 15">
          <path d="M1 5h3l4-4v13l-4-4H1z" fill="#e8eef4" stroke="#555" strokeWidth="0.500" />
          <path d="M10 5q2 2.500 0 5M12 3q3 4.500 0 9" fill="none" stroke="#e8eef4" />
        </svg>
        <div className="mt-[7px] text-[11.500px] leading-[16px] text-[#eef2f7]">14:33</div>
        <div className="text-[11.500px] leading-[16px] tracking-[-0.3px] text-[#eef2f7]">25/09/2013</div>
        <div className="mt-[2px] h-[14px] w-[60px] self-start rounded-[1px] border border-[#cfd7df] bg-gradient-to-r from-[#7f90a3] to-[#5c6c7e]" />
      </div>
    </div>
  );
}

function StatusCell({ w, children }) {
  return (
    <div className={`${w} ml-[2px] h-[17px] shrink-0 border-t-2 border-l border-[#a8a8a8] pl-[2px] text-[11px] leading-[15px] text-[#222]`}>{children}</div>
  );
}

function StatusBar() {
  return (
    <div className="absolute bottom-0 left-[62px] right-0 z-10 flex h-[20px] items-end border-t border-white bg-[#eeeeee]" style={classic}>
      <StatusCell w="w-[278px]">Attn:</StatusCell>
      <StatusCell w="w-[277px]">Res</StatusCell>
      <StatusCell w="w-[277px]">Bus</StatusCell>
      <StatusCell w="w-[277px]">Fax</StatusCell>
      <StatusCell w="w-[235px]">14:33</StatusCell>
    </div>
  );
}

export default function App() {
  return (
    <div className="relative h-[900px] w-[1440px] overflow-hidden bg-[#ababab]">
      <HomeBaseWindow />
      <AdobeWindow />
      <StatusBar />
      <Taskbar />
    </div>
  );
}
